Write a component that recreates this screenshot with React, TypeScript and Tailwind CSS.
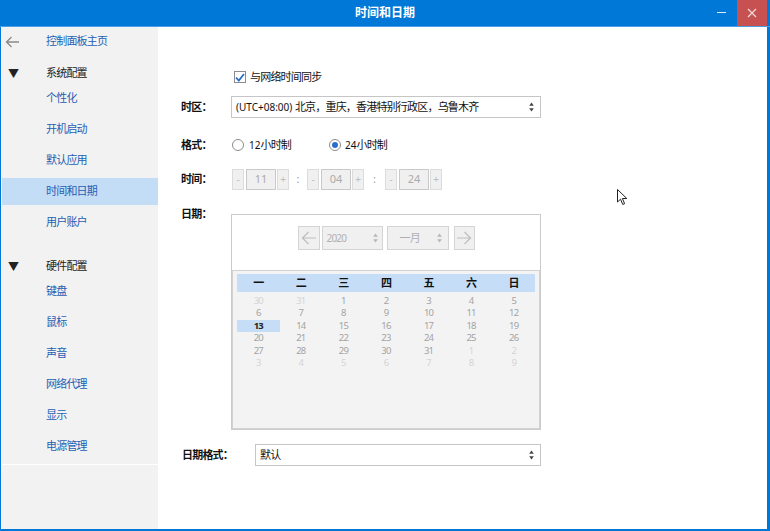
import React from "react";

const FONT = "font-['Noto_Sans','Noto_Sans_CJK_SC',sans-serif]";

function SideItem({ label, active }: { label: string; active?: boolean }) {
  return (
    <div
      className={`h-[27px] flex items-center pl-[44px] text-[11px] tracking-[-0.8px] text-[#1f5fb4] ${
        active ? "bg-[#c4ddf6]" : ""
      }`}
    >
      {label}
    </div>
  );
}

function SideHeader({ label }: { label: string }) {
  return (
    <div className="h-[20px] flex items-center text-[11px] tracking-[-0.8px] text-[#222]">
      <span className="w-[44px] pl-[6px] text-[11px] tracking-normal leading-none">▼</span>
      {label}
    </div>
  );
}

function UpDown({ dim }: { dim?: boolean }) {
  const c = dim ? "#b5b5b5" : "#444";
  return (
    <svg width="5" height="10" viewBox="0 0 5 10">
      <path d="M2.5 0.5 L4.8 3.8 L0.2 3.8 Z" fill={c} />
      <path d="M2.5 9.5 L4.8 6.2 L0.2 6.2 Z" fill={c} />
    </svg>
  );
}

function Spinner({ value }: { value: string }) {
  return (
    <div className="flex items-stretch h-[21px]">
      <div className="w-[12px] border border-[#dcdcdc] bg-[#f0f0f0] text-[#bdbdbd] text-[10px] flex items-center justify-center">
        -
      </div>
      <div className="ml-[2px] w-[30px] border border-[#c9c9c9] bg-[#f0f0f0] text-[#ababab] text-[11px] flex items-center justify-center">
        {value}
      </div>
      <div className="ml-px w-[12px] border border-[#dcdcdc] bg-[#f0f0f0] text-[#bdbdbd] text-[10px] flex items-center justify-center">
        +
      </div>
    </div>
  );
}

const weeks: [number, boolean][][] = [
  [[30, false], [31, false], [1, true], [2, true], [3, true], [4, true], [5, true]],
  [[6, true], [7, true], [8, true], [9, true], [10, true], [11, true], [12, true]],
  [[13, true], [14, true], [15, true], [16, true], [17, true], [18, true], [19, true]],
  [[20, true], [21, true], [22, true], [23, true], [24, true], [25, true], [26, true]],
  [[27, true], [28, true], [29, true], [30, true], [31, true], [1, false], [2, false]],
  [[3, false], [4, false], [5, false], [6, false], [7, false], [8, false], [9, false]],
];

function Calendar() {
  return (
    <div className="w-[310px] h-[216px] border border-[#cbcbcb] bg-white flex flex-col">
      <div className="h-[55px] flex justify-center pt-[11px]">
        <div className="flex h-[24px]">
          <div className="w-[22px] border border-[#d4d4d4] bg-[#f0f0f0] flex items-center justify-center">
            <svg width="16" height="14" viewBox="0 0 16 14">
              <path d="M15 7 H1.5 M7.5 1 L1.5 7 L7.5 13" stroke="#bdbdbd" strokeWidth="1.2" fill="none" />
            </svg>
          </div>
          <div className="ml-[2px] w-[61px] border border-[#d4d4d4] bg-[#f0f0f0] flex items-center justify-between px-[4px] text-[10px] text-[#b0b0b0]">
            2020
            <UpDown dim />
          </div>
          <div className="ml-[4px] w-[62px] border border-[#d4d4d4] bg-[#f0f0f0] flex items-center justify-between pl-[12px] pr-[6px] text-[11px] tracking-[-0.8px] text-[#b0b0b0]">
            一月
            <UpDown dim />
          </div>
          <div className="ml-[5px] w-[21px] border border-[#d4d4d4] bg-[#f0f0f0] flex items-center justify-center">
            <svg width="16" height="14" viewBox="0 0 16 14">
              <path d="M1 7 H14.5 M8.5 1 L14.5 7 L8.5 13" stroke="#bdbdbd" strokeWidth="1.2" fill="none" />
            </svg>
          </div>
        </div>
      </div>
      <div className="flex-1 border border-[#d2d2d2] bg-[#f3f3f3] px-[4px] pt-[3px]">
        <div className="grid grid-cols-7 h-[18px] bg-[#c5ddf6] text-[11px] font-bold text-[#111] items-center text-center">
          {["一", "二", "三", "四", "五", "六", "日"].map((d) => (
            <div key={d}>{d}</div>
          ))}
        </div>
        <div className="mt-[3px]">
          {weeks.map((w, i) => (
            <div key={i} className="grid grid-cols-7 h-[12.4px] text-[9.5px] leading-[12px] text-center">
              {w.map(([n, cur], j) => {
                const sel = i === 2 && j === 0;
                return (
                  <div
                    key={j}
                    className={
                      sel
                        ? "bg-[#c5ddf6] font-bold text-[#222]"
                        : cur
                        ? "text-[#a3a3a3]"
                        : "text-[#d3d3d3]"
                    }
                  >
                    {n}
                  </div>
                );
              })}
            </div>
          ))}
        </div>
      </div>
    </div>
  );
}

export default function App() {
  return (
    <div className={`w-[770px] h-[531px] bg-white flex flex-col relative overflow-hidden ${FONT}`}>
      {/* title bar */}
      <div className="h-[26px] bg-[#0078d7] flex items-center relative shrink-0">
        <div className="flex-1 text-center text-white text-[12px] font-bold">时间和日期</div>
        <div className="absolute right-[44px] top-[12px] w-[9px] h-px bg-[#dfeefa]" />
        <div className="absolute right-[3px] top-0 w-[30px] h-[26px] bg-[#c75050] flex items-center justify-center">
          <svg width="10" height="10" viewBox="0 0 10 10">
            <path d="M1 1 L9 9 M9 1 L1 9" stroke="#f4d8d8" strokeWidth="1.3" />
          </svg>
        </div>
      </div>
      <div className="h-px bg-[#4aa0e6] shrink-0" />
      <div className="flex-1 flex border-l border-r-[3px] border-b-2 border-[#0078d7] min-h-0">
        {/* sidebar */}
        <div className="w-[156px] ml-px bg-[#f2f2f2] flex flex-col pt-px">
          <div className="h-[27px] flex items-center text-[11px] tracking-[-0.8px] text-[#1f5fb4]">
            <span className="w-[44px] pl-[3px]">
              <svg width="15" height="12" viewBox="0 0 15 12">
                <path d="M14 6 H1.5 M6.5 1 L1.5 6 L6.5 11" stroke="#8a8a8a" strokeWidth="1.3" fill="none" />
              </svg>
            </span>
            控制面板主页
          </div>
          <div className="mt-[8px]">
            <SideHeader label="系统配置" />
          </div>
          <div className="mt-[2px] flex flex-col gap-[4px]">
            <SideItem label="个性化" />
            <SideItem label="开机启动" />
            <SideItem label="默认应用" />
            <SideItem label="时间和日期" active />
            <SideItem label="用户账户" />
          </div>
          <div className="mt-[20px]">
            <SideHeader label="硬件配置" />
          </div>
          <div className="mt-[2px] flex flex-col gap-[4px]">
            <SideItem label="键盘" />
            <SideItem label="鼠标" />
            <SideItem label="声音" />
            <SideItem label="网络代理" />
            <SideItem label="显示" />
            <SideItem label="电源管理" />
          </div>
          <div className="mt-[4px] h-px bg-white" />
        </div>

        {/* content */}
        <div className="flex-1 pl-[23px] pt-[42px] text-[11px] tracking-[-0.8px] text-[#111]">
          <div className="ml-[53px] h-[16px] flex items-center gap-[4px]">
            <div className="w-[12px] h-[12px] border border-[#8c8c8c] bg-white flex items-center justify-center">
              <svg width="10" height="9" viewBox="0 0 10 9">
                <path d="M1 4.5 L3.8 7.5 L9 1" stroke="#2a6ecc" strokeWidth="1.8" fill="none" />
              </svg>
            </div>
            与网络时间同步
          </div>

          <div className="mt-[11px] flex items-center">
            <div className="w-[50px] font-bold">时区：</div>
            <div className="w-[310px] h-[22px] border border-[#c6c6c6] bg-white flex items-center justify-between pl-[4px] pr-[6px]">
              <span>
                <span className="text-[10px] tracking-normal">(UTC+08:00) </span>
                北京，重庆，香港特别行政区，乌鲁木齐
              </span>
              <UpDown />
            </div>
          </div>

          <div className="mt-[19px] h-[16px] flex items-center">
            <div className="w-[50px] font-bold">格式：</div>
            <div className="flex items-center gap-[5px] w-[98px] pl-px">
              <div className="w-[12px] h-[12px] rounded-full border border-[#8c8c8c] bg-white" />
              <span>
                <span className="tracking-normal text-[10px]">12</span>小时制
              </span>
            </div>
            <div className="flex items-center gap-[4px]">
              <div className="w-[12px] h-[12px] rounded-full border border-[#8c8c8c] bg-white flex items-center justify-center">
                <div className="w-[6px] h-[6px] rounded-full bg-[#2a6ecc]" />
              </div>
              <span>
                <span className="tracking-normal text-[10px]">24</span>小时制
              </span>
            </div>
          </div>

          <div className="mt-[16px] flex items-center tracking-normal">
            <div className="w-[51px] font-bold tracking-[-0.8px]">时间：</div>
            <Spinner value="11" />
            <div className="w-[18px] text-center text-[#9a9a9a]">:</div>
            <Spinner value="04" />
            <div className="w-[21px] text-center text-[#9a9a9a]">:</div>
            <Spinner value="24" />
          </div>

          <div className="mt-[24px] flex items-start">
            <div className="w-[50px] font-bold -mt-[8px] leading-[16px]">日期：</div>
            <Calendar />
          </div>

          <div className="mt-[14px] flex items-center">
            <div className="w-[74px] pl-px font-bold">日期格式：</div>
            <div className="w-[286px] h-[22px] border border-[#c6c6c6] bg-white flex items-center justify-between pl-[4px] pr-[6px]">
              <span>默认</span>
              <UpDown />
            </div>
          </div>
        </div>
      </div>

      {/* mouse pointer */}
      <svg className="absolute left-[617px] top-[189px]" width="12" height="17" viewBox="0 0 12 17">
        <path d="M0.5 0.5 L0.5 13 L3.5 10.2 L5.8 15.5 L7.6 14.7 L5.4 9.5 L9.8 9.5 Z" fill="white" stroke="#222" strokeWidth="1" />
      </svg>
    </div>
  );
}
